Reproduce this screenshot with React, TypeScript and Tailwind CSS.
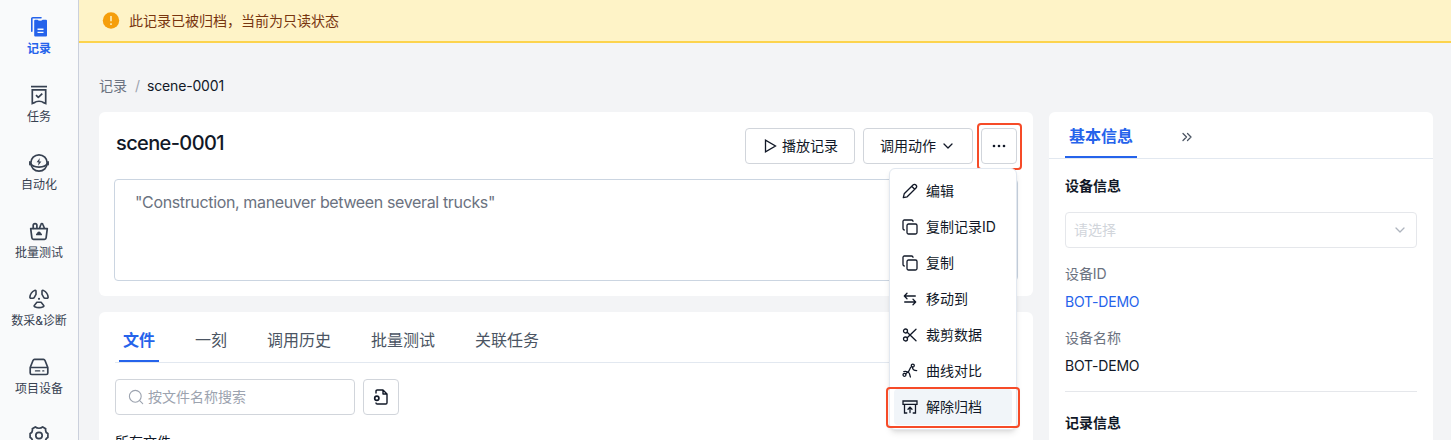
import React from 'react';
import type { ReactNode } from 'react';

type IconProps = { children: ReactNode; size?: string; box?: string; width?: number };

function Icon({ children, size = 'size-5', box = '0 0 20 20', width = 1.5 }: IconProps) {
  return (
    <svg className={`${size} shrink-0`} viewBox={box} fill="none" stroke="currentColor" strokeWidth={width} strokeLinecap="round" strokeLinejoin="round">
      {children}
    </svg>
  );
}

const navItems: { label: string; icon: ReactNode }[] = [
  {
    label: '记录',
    icon: (
      <Icon>
        <path d="M2.8 14.2V1.8a1 1 0 0 1 1-1H12" strokeWidth="1.6" />
        <path d="M6.2 2.8h2.3a2.8 1.4 0 0 0 5.2 0h3.3a1 1 0 0 1 1 1V18.6a1 1 0 0 1-1 1H6.2a1 1 0 0 1-1-1V3.8a1 1 0 0 1 1-1z" fill="currentColor" stroke="none" />
        <path d="M8.5 12.2h6M8.5 15.4h6" stroke="#f8fafc" strokeWidth="1.4" strokeLinecap="butt" />
      </Icon>
    ),
  },
  {
    label: '任务',
    icon: (
      <Icon width={1.7}>
        <path d="M2 1.6h16" strokeLinecap="butt" />
        <path d="M3.3 4.9h13.4v13.6l-2.4-.9c-1.3-1.8-7.3-1.8-8.600 0l-2.400.9z" strokeLinejoin="miter" />
        <path d="m7 10.2 2.3 2.2 4-3.8" strokeLinecap="butt" />
      </Icon>
    ),
  },
  {
    label: '自动化',
    icon: (
      <Icon width={1.7}>
        <circle cx="10" cy="10" r="8.2" />
        <path d="M1.5 10C3.4 15.4 16.6 15.4 18.5 10" />
        <path d="M.9 8.8v2.800M19.100 8.800v2.800" />
        <path d="M10.8 4.900 7.600 9.300h2l-.5 3.400 3.300-4.300h-2.100z" fill="currentColor" stroke="none" />
      </Icon>
    ),
  },
  {
    label: '批量测试',
    icon: (
      <Icon width={1.7}>
        <path d="M1.700 7.600h16.600l-1.200 9.300a1.600 1.600 0 0 1-1.600 1.400h-11a1.600 1.600 0 0 1-1.600-1.400z" />
        <path d="M4.200 7.300V4.200c0-2.200 3.700-2.200 3.700 0v2.600M10.700 6.800l1.300-3.600c.3-.9 1.500-.9 1.800 0l1.600 4" />
        <path d="M7.200 14.300a1.300 1.300 0 0 1 .9-2 1.900 1.900 0 0 1 3.800 0 1.300 1.300 0 0 1 .9 2z" fill="currentColor" stroke="none" />
      </Icon>
    ),
  },
  {
    label: '数采&诊断',
    icon: (
      <Icon width={1.600}>
        <path d="M5.700 1.400C3 2.700 1.200 5.100.9 8.100c-.1.700.4 1.100 1 1.100H4c.6 0 1-.3 1.300-.9l1.700-3V2.200c0-.7-.6-1.100-1.300-.8z" />
        <path d="M14.300 1.400c2.700 1.300 4.500 3.700 4.800 6.700.1.700-.4 1.100-1 1.100H16c-.6 0-1-.3-1.300-.9l-1.700-3V2.200c0-.7.600-1.100 1.300-.8z" />
        <path d="M7.900 13.300h4.200l2.600 3.200c.3.500.1 1-.4 1.200-2.700 1.200-5.900 1.200-8.600 0-.5-.2-.7-.7-.4-1.200z" />
        <circle cx="10" cy="9.800" r="1.100" fill="currentColor" stroke="none" />
      </Icon>
    ),
  },
  {
    label: '项目设备',
    icon: (
      <Icon width={1.7}>
        <path d="M1.200 10.500 4 3.500c.3-.7.8-1.100 1.500-1.100h9c.7 0 1.200.4 1.500 1.100l2.800 7v5.400c0 1-.6 1.600-1.500 1.600H2.700c-.9 0-1.500-.6-1.500-1.600v-5.400h17.600" />
        <path d="M6.500 13.900h4.200M13.800 13.900h1" strokeWidth="1.4" />
      </Icon>
    ),
  },
  {
    label: '',
    icon: (
      <Icon width={1.7}>
        <circle cx="10" cy="10.5" r="3.2" />
        <path d="M6.300 1.900c1.800 1.800 5.600 1.800 7.400 0l3 1.800c-.5 2.400.6 4.200 2.200 4.900v3.800c-1.800.8-2.700 2.600-2.200 4.900l-3 1.800c-1.800-1.800-5.600-1.800-7.400 0l-3-1.800c.5-2.300-.4-4.100-2.200-4.900V8.600c1.600-.7 2.700-2.500 2.200-4.900z" />
      </Icon>
    ),
  },
];

const copyIcon = (
  <Icon size="size-4" box="0 0 16 16" width={1.3}>
    <rect x="5" y="5" width="10" height="10" rx="1.5" />
    <path d="M2.3 11A1.4 1.4 0 0 1 1 9.6V2.3A1.3 1.3 0 0 1 2.3 1h7.3A1.4 1.4 0 0 1 11 2.3" />
  </Icon>
);

const menuItems: { label: string; icon: ReactNode }[] = [
  {
    label: '编辑',
    icon: (
      <Icon size="size-4" box="0 0 16 16" width={1.3}>
        <path d="m1.300 14.700.9-3.900L11 2c1.900-1.900 4.900 1.100 3 3l-8.800 8.800zM9.700 3.300l3 3" />
      </Icon>
    ),
  },
  { label: '复制记录ID', icon: copyIcon },
  { label: '复制', icon: copyIcon },
  {
    label: '移动到',
    icon: (
      <Icon size="size-4" box="0 0 16 16" width={1.3}>
        <path d="M13.300 5H2.300L5 2.300M2.300 5 5 7.700M2.700 11h11l-2.700-2.700M13.700 11 11 13.700" />
      </Icon>
    ),
  },
  {
    label: '裁剪数据',
    icon: (
      <Icon size="size-4" box="0 0 16 16" width={1.3}>
        <circle cx="3.500" cy="4" r="2" />
        <circle cx="3.500" cy="12" r="2" />
        <path d="M5.200 5.300 14 13.700M5.200 10.700 14 2.300" />
      </Icon>
    ),
  },
  {
    label: '曲线对比',
    icon: (
      <Icon size="size-4" box="0 0 16 16" width={1.3}>
        <circle cx="10.800" cy="2.600" r="1.500" />
        <circle cx="2.500" cy="11.800" r="1.500" />
        <path d="M9.600 3.500C7.600 5 7.800 7 6.300 8.700L3.600 10.800M1.800 8.600c2-.6 4 .1 5.200 1.300 1 1 .6 2.500 1.400 4.100M10.600 4.100C10.200 6.300 12 7.600 14.700 7.600" />
      </Icon>
    ),
  },
  {
    label: '解除归档',
    icon: (
      <Icon size="size-4" box="0 0 16 16" width={1.3}>
        <path d="M1 2h14v3.300H1zM2.500 5.500V14H4.800M13.500 5.500V14h-2.300M8 13.500V8.300M6 10.200l2-2 2 2" strokeLinejoin="miter" />
      </Icon>
    ),
  },
];

function Sidebar() {
  return (
    <nav className="flex w-[79px] shrink-0 flex-col border-r border-[#cbd0dc] bg-[#f9fafb] pt-[17px]">
      {navItems.map((item, i) => (
        <a key={i} className={`flex h-[68px] shrink-0 flex-col items-center ${i === 0 ? 'font-bold text-[#2563eb]' : 'text-[#374151]'}`}>
          {item.icon}
          {item.label && <span className="mt-1 text-xs leading-4 whitespace-nowrap">{item.label}</span>}
        </a>
      ))}
    </nav>
  );
}

function ActionMenu() {
  return (
    <div className="absolute top-[40px] right-0 z-10 w-[128px] rounded-md border border-[#e2e8f0] bg-white p-1 shadow-md">
      {menuItems.map((item, i) => (
        <div key={item.label} className={`flex h-9 items-center gap-2 rounded-sm pl-2 text-sm ${i === 6 ? 'bg-[#f1f5f9]' : ''}`}>
          {item.icon}
          <span className="whitespace-nowrap">{item.label}</span>
        </div>
      ))}
      <div className="absolute top-[218px] -left-1 h-[41px] w-[134px] rounded-[4px] border-2 border-[#f64b28]" />
    </div>
  );
}

function RecordCard() {
  return (
    <section className="h-[184px] shrink-0 rounded-md bg-white px-[15px] pt-4">
      <div className="flex h-9 items-start justify-between pr-px pl-0.5">
        <h1 className="text-xl leading-[30px] font-medium tracking-[-0.62px] text-[#111827]">scene-0001</h1>
        <div className="relative flex gap-2 text-sm">
          <button className="flex h-9 w-[110px] items-center justify-center gap-1 rounded border border-[#d1d5db]">
            <Icon size="size-4" box="0 0 16 16" width={1.3}>
              <path d="M3.500 2.200v11.600L13.500 8z" strokeLinejoin="miter" />
            </Icon>
            播放记录
          </button>
          <button className="flex h-9 w-[110px] items-center justify-center gap-1 rounded border border-[#d1d5db]">
            调用动作
            <Icon size="size-4" box="0 0 16 16" width={1.3}>
              <path d="m4 6 4 4 4-4" />
            </Icon>
          </button>
          <button className="relative flex size-9 items-center justify-center rounded border border-[#d1d5db]">
            <svg className="size-4" viewBox="0 0 16 16" fill="currentColor">
              <circle cx="3" cy="8" r="1.300" />
              <circle cx="8" cy="8" r="1.300" />
              <circle cx="13" cy="8" r="1.300" />
            </svg>
            <span className="absolute -top-[6px] -left-[5px] h-[47px] w-[45px] rounded-[4px] border-2 border-[#f64b28]" />
          </button>
          <ActionMenu />
        </div>
      </div>
      <div className="mt-[15px] h-[102px] rounded-sm border border-[#cbd5e1] px-5 pt-[10px] text-base tracking-[-0.36px] text-[#6b7280]">
        "Construction, maneuver between several trucks"
      </div>
    </section>
  );
}

function FilesCard() {
  return (
    <section className="mt-4 flex-1 rounded-t-md bg-white px-4">
      <div className="flex h-[51px] gap-10 border-b border-[#e2e8f0] pl-1 text-base text-[#4b5563]">
        <span className="-mr-1 flex h-[50px] w-10 items-center justify-center border-b-2 border-[#2563eb] pt-2 font-bold text-[#2563eb]">文件</span>
        {['一刻', '调用历史', '批量测试', '关联任务'].map((tab) => (
          <span key={tab} className="flex h-[50px] items-center pt-1.5">{tab}</span>
        ))}
      </div>
      <div className="mt-4 flex gap-2">
        <div className="flex h-9 w-60 items-center gap-1 rounded border border-[#d1d5db] px-3 text-sm text-[#9ca3af]">
          <Icon size="size-4" box="0 0 16 16" width={1.1}>
            <circle cx="7.300" cy="7.300" r="5.900" />
            <path d="m11.700 11.700 3 3" />
          </Icon>
          按文件名称搜索
        </div>
        <button className="flex size-9 items-center justify-center rounded border border-[#d1d5db]">
          <Icon size="size-4" box="0 0 16 16" width={1.4}>
            <path d="M3 4V2.200C3 1.500 3.500 1 4.200 1H10l4 4v8.800c0 .7-.5 1.200-1.200 1.200H4.200C3.500 15 3 14.600 3 14M10 1v4h4" />
            <circle cx="3.800" cy="9.200" r="2.100" strokeWidth="1.7" />
          </Icon>
        </button>
      </div>
      <div className="mt-[17px] text-sm">所有文件</div>
    </section>
  );
}

function InfoPanel() {
  return (
    <aside className="flex w-96 shrink-0 flex-col rounded-t-md bg-white text-sm">
      <div className="flex h-[47px] shrink-0 border-b border-[#e2e8f0] pl-4">
        <span className="flex h-[46px] w-[72px] items-center justify-center border-b-2 border-[#2563eb] pt-1 text-base font-bold text-[#2563eb]">基本信息</span>
        <span className="ml-[42px] flex items-center pt-1 text-[#4b5563]">
          <Icon size="size-4" box="0 0 16 16" width={1.3}>
            <path d="m4 4.500 3.500 3.500L4 11.500M8.500 4.500 12 8l-3.500 3.500" />
          </Icon>
        </span>
      </div>
      <div className="px-4 pt-[17px]">
        <h2 className="font-bold">设备信息</h2>
        <div className="mt-4 flex h-9 items-center justify-between rounded border border-[#e5e7eb] pr-2 pl-2 text-[#d1d5db]">
          请选择
          <Icon size="size-4" box="0 0 16 16" width={1.3}>
            <path d="m4 6 4 4 4-4" stroke="#aeb4be" />
          </Icon>
        </div>
        <div className="mt-4 tracking-[-0.1px] text-[#6b7280]">设备ID</div>
        <div className="mt-2 tracking-[-0.17px] text-[#2563eb]">BOT-DEMO</div>
        <div className="mt-4 text-[#6b7280]">设备名称</div>
        <div className="mt-2 tracking-[-0.17px]">BOT-DEMO</div>
        <h2 className="mt-[15px] border-t border-[#e5e7eb] pt-[21px] font-bold">记录信息</h2>
      </div>
    </aside>
  );
}

export default function App() {
  return (
    <div className="flex h-[440px] w-[1451px] overflow-hidden bg-[#f3f4f6] font-['Inter','Noto_Sans_CJK_SC',sans-serif] text-[#111827]">
      <Sidebar />
      <main className="flex min-w-0 flex-1 flex-col">
        <div className="flex h-[43px] shrink-0 items-center gap-[9px] border-b-2 border-[#fcd34d] bg-[#fef3c7] pl-[23px] text-sm text-[#78350f]">
          <svg className="size-[18px]" viewBox="0 0 18 18">
            <circle cx="9" cy="8.500" r="8.200" fill="#f59e0b" />
            <path d="M9 4.100v5.200M9 11.300v1.700" stroke="#fef3c7" strokeWidth="1.500" />
          </svg>
          此记录已被归档，当前为只读状态
        </div>
        <div className="flex h-[69px] shrink-0 items-center gap-2 px-5 pt-[17px] text-sm">
          <span className="text-[#6b7280]">记录</span>
          <span className="-mr-px text-[#9ca3af]">/</span>
          <span className="tracking-[-0.17px]">scene-0001</span>
        </div>
        <div className="flex min-h-0 flex-1 gap-4 pr-[18px] pl-5">
          <div className="flex min-w-0 flex-1 flex-col">
            <RecordCard />
            <FilesCard />
          </div>
          <InfoPanel />
        </div>
      </main>
    </div>
  );
}
